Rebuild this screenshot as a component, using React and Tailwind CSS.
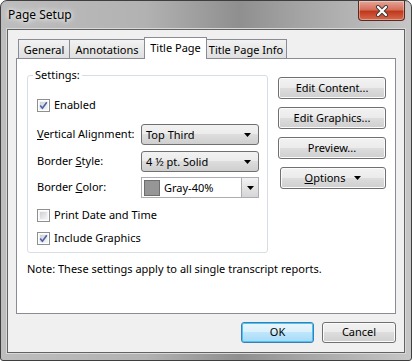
import React from "react";

const font = { fontFamily: '"Noto Sans", "Segoe UI", sans-serif' };

function CheckBox({ checked }) {
  return (
    <span className="w-[13px] h-[13px] shrink-0 border border-[#8e8f8f] bg-white p-px flex">
      <span className="flex-1 bg-[linear-gradient(135deg,#cdd0d6,#f4f4f4)] border border-[#f4f4f4] relative">
        {checked && (
          <svg viewBox="0 0 9 9" className="absolute -left-px -top-px w-[9px] h-[9px]">
            <path d="M1.2 4.6 L3.4 7.2 L7.8 1.2" fill="none" stroke="#4a62a6" strokeWidth="1.6" />
          </svg>
        )}
      </span>
    </span>
  );
}

function Arrow() {
  return (
    <svg width="7" height="4" viewBox="0 0 7 4">
      <path d="M0 0 H7 L3.5 4 Z" fill="#000" />
    </svg>
  );
}

function Select({ children }) {
  return (
    <div className="w-[118px] h-[21px] rounded-[3px] border border-[#707070] bg-[linear-gradient(#f2f2f2_0%,#ebebeb_49%,#dddddd_50%,#cfcfcf_100%)] flex items-center pl-[4px] pr-[7px]">
      <span className="flex-1 leading-none whitespace-nowrap">{children}</span>
      <Arrow />
    </div>
  );
}

function Button({ children, className = "" }) {
  return (
    <div
      className={`h-[22px] rounded-[3px] border border-[#707070] bg-[linear-gradient(#f2f2f2_0%,#ebebeb_49%,#dddddd_50%,#cfcfcf_100%)] shadow-[inset_0_0_0_1px_#fbfbfb] flex items-center justify-center whitespace-nowrap ${className}`}
    >
      {children}
    </div>
  );
}

export default function App() {
  const tabs = [
    { label: "General", w: "w-[52px]" },
    { label: "Annotations", w: "w-[76px]" },
    { label: "Title Page", w: "w-[63px]", active: true },
    { label: "Title Page Info", w: "w-[82px]" },
  ];

  return (
    <div
      style={font}
      className="w-[412px] h-[361px] flex flex-col rounded-t-[7px] rounded-b-[3px] border border-[#3e3e3e] bg-[linear-gradient(90deg,#bdbdbd_0%,#b2b2b2_35%,#8f8f8f_58%,#a3a3a3_72%,#c6c6c6_100%)] text-[11px] text-black"
    >
      {/* title bar */}
      <div className="h-[28px] flex items-start">
        <span className="pl-[7px] pt-[5px] text-[12px] leading-[18px] [text-shadow:0_0_8px_#fff,0_0_4px_#fff]">
          Page Setup
        </span>
        <div className="ml-auto mr-[6px] w-[47px] h-[20px] rounded-b-[4px] border border-t-0 border-[#5a2a22] bg-[linear-gradient(#e6a597_0%,#d4705c_45%,#c1391d_55%,#d66a4d_100%)] shadow-[inset_0_0_0_1px_rgba(255,255,255,0.35)] flex items-center justify-center">
          <svg width="14" height="12" viewBox="0 0 14 12">
            <path d="M3 2 L11 10 M11 2 L3 10" stroke="#3b3b3b" strokeWidth="4" strokeLinecap="round" />
            <path d="M3 2 L11 10 M11 2 L3 10" stroke="#fff" strokeWidth="2.2" strokeLinecap="round" />
          </svg>
        </div>
      </div>

      {/* client */}
      <div className="mx-[6px] mb-[7px] flex-1 border border-[#626262] bg-[#f0f0f0] shadow-[0_0_0_1px_#d8d8d8] px-[8px] pt-[7px] flex flex-col">
        {/* tabs */}
        <div className="flex items-end pl-[2px] h-[21px]">
          {tabs.map((t) =>
            t.active ? (
              <div
                key={t.label}
                className={`${t.w} h-[22px] -mb-px -mx-px relative z-10 bg-white border border-b-0 border-[#898c95] flex items-center justify-center leading-none pb-[2px] whitespace-nowrap`}
              >
                {t.label}
              </div>
            ) : (
              <div
                key={t.label}
                className={`${t.w} h-[19px] bg-[linear-gradient(#f2f2f2,#dfdfdf)] border border-b-0 border-[#898c95] -ml-px first:ml-0 flex items-center justify-center leading-none whitespace-nowrap`}
              >
                {t.label}
              </div>
            )
          )}
        </div>

        {/* panel */}
        <div className="h-[256px] bg-white border border-[#898c95] flex">
          <div className="ml-[10px] w-[241px] flex flex-col">
            <fieldset className="mt-[8px] border border-[#d5dfe5] rounded-[3px] pl-[9px] pb-[6px]">
              <legend className="-ml-[4px] px-[2px] leading-[16px]">Settings:</legend>
              <div className="mt-[14px] h-[16px] flex items-center gap-[4px]">
                <CheckBox checked />
                <span>Enabled</span>
              </div>
              <div className="mt-[11px] flex items-center">
                <span className="w-[104px] whitespace-nowrap">
                  <u>V</u>ertical Alignment:
                </span>
                <Select>Top Third</Select>
              </div>
              <div className="mt-[6px] flex items-center">
                <span className="w-[104px] whitespace-nowrap">
                  Border <u>S</u>tyle:
                </span>
                <Select>4 ½ pt. Solid</Select>
              </div>
              <div className="mt-[5px] flex items-center">
                <span className="w-[104px] whitespace-nowrap">
                  Border <u>C</u>olor:
                </span>
                <div className="w-[118px] h-[21px] border border-[#abadb3] bg-white flex items-center pl-[2px]">
                  <span className="w-[16px] h-[16px] bg-[#969696] border border-[#6e6e6e]" />
                  <span className="flex-1 pl-[4px] leading-none">Gray-40%</span>
                  <span className="w-[17px] h-[19px] border-l border-[#abadb3] bg-[linear-gradient(#f2f2f2,#d6d6d6)] flex items-center justify-center">
                    <Arrow />
                  </span>
                </div>
              </div>
              <div className="mt-[9px] h-[16px] flex items-center gap-[4px]">
                <CheckBox />
                <span>Print Date and Time</span>
              </div>
              <div className="mt-[7px] h-[16px] flex items-center gap-[4px]">
                <CheckBox checked />
                <span>Include Graphics</span>
              </div>
            </fieldset>
            <div className="mt-[8px] leading-[16px] whitespace-nowrap">
              Note: These settings apply to all single transcript reports.
            </div>
          </div>

          <div className="ml-[10px] w-[108px] mt-[18px] flex flex-col gap-[8px]">
            <Button>Edit Content...</Button>
            <Button>Edit Graphics...</Button>
            <Button>Preview...</Button>
            <Button className="ml-[2px] gap-[9px]">
              <span>
                <u>O</u>ptions
              </span>
              <Arrow />
            </Button>
          </div>
        </div>

        {/* bottom buttons */}
        <div className="mt-[8px] flex justify-end gap-[8px]">
          <div className="w-[73px] h-[21px] rounded-[3px] border border-[#3c7fb1] bg-[linear-gradient(#eaf6fd_0%,#d9f0fc_49%,#bee6fd_50%,#a7d9f5_100%)] shadow-[inset_0_0_0_1px_#48c4f7] flex items-center justify-center">
            OK
          </div>
          <div className="w-[74px] h-[21px] rounded-[3px] border border-[#707070] bg-[linear-gradient(#f2f2f2_0%,#ebebeb_49%,#dddddd_50%,#cfcfcf_100%)] shadow-[inset_0_0_0_1px_#fbfbfb] flex items-center justify-center">
            Cancel
          </div>
        </div>
      </div>
    </div>
  );
}
